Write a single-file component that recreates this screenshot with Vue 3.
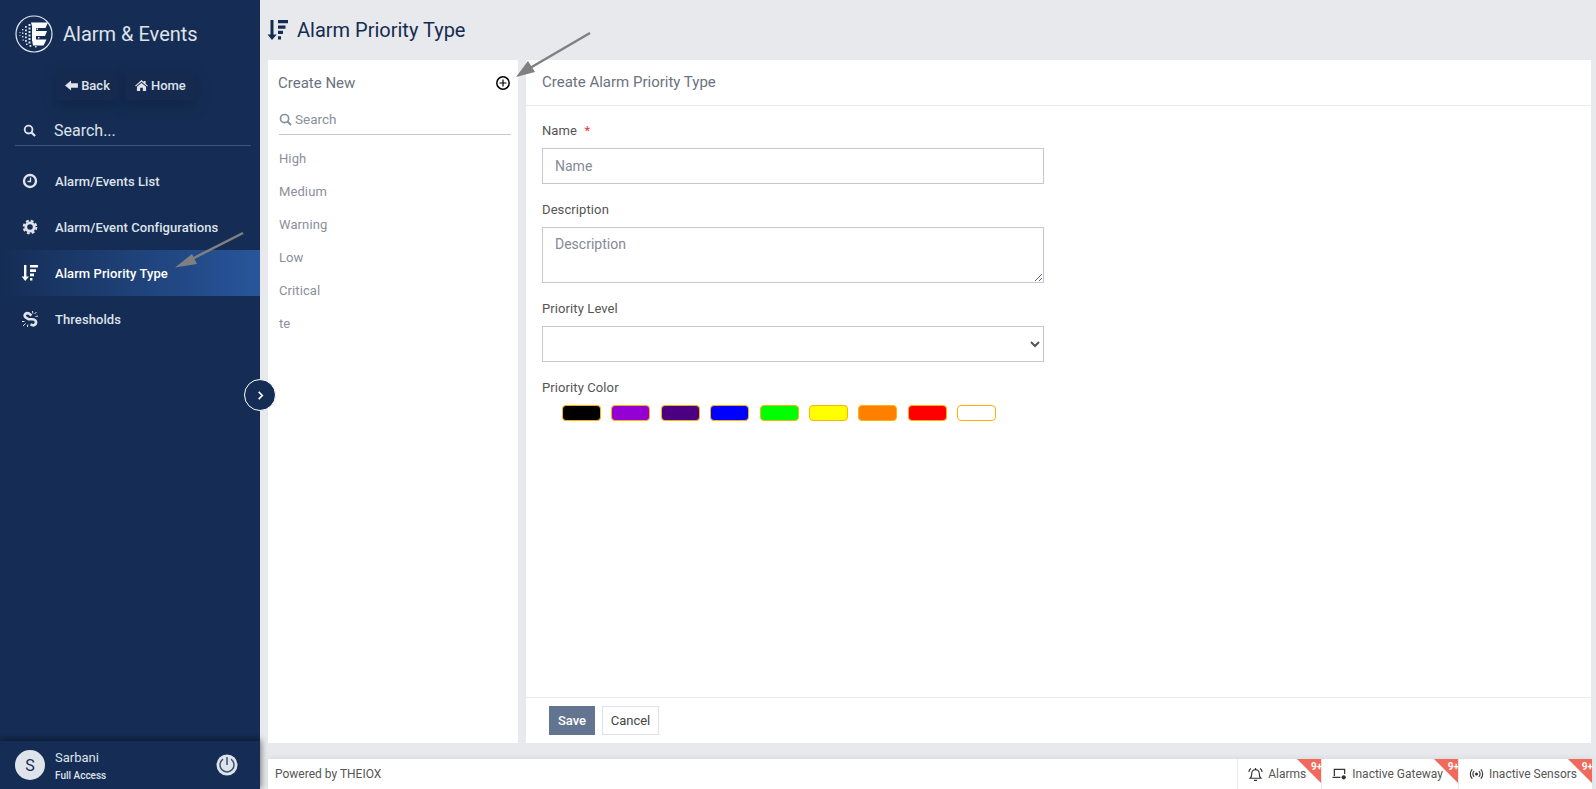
<template>
  <div class="app">
    <aside class="sidebar">
      <div class="brand">
        <svg class="logo" viewBox="0 0 38 38">
          <circle cx="19" cy="19" r="18" fill="none" stroke="#e3e6ec" stroke-width="1.200" />
          <path d="M16 7.500H33L30.500 13H17.500zM18 16H32L30 21H19zM17 24.500H31.500L28.500 30.500H18z" fill="#fff" />
          <path d="M17 12h4v14h-4z" fill="#fff" />
          <rect v-for="d in logoDots" :key="d[0] + '-' + d[1]" :x="d[0]" :y="d[1]" :width="d[2]" :height="d[2]" fill="#dfe3ea" />
        </svg>
        <span class="brand-name">Alarm &amp; Events</span>
      </div>
      <div class="nav-btns">
        <button class="nav-btn">
          <svg viewBox="0 0 14 12" width="13" height="11"><path d="M0 6l6.500-5.500V3.500H14v5H6.500v3z" fill="currentColor" /></svg>
          Back
        </button>
        <button class="nav-btn">
          <svg viewBox="0 0 14 12" width="13" height="11"><path d="M7 0l2.500 2.200V1h2v3L14 6.200l-.8.9L7 1.800.8 7.100 0 6.200zM2 7.400L7 3.200l5 4.200V12H8.500V8.500h-3V12H2z" fill="currentColor" /></svg>
          Home
        </button>
      </div>
      <div class="side-search">
        <svg viewBox="0 0 14 14" width="13" height="13"><circle cx="6" cy="6" r="4.200" fill="none" stroke="currentColor" stroke-width="2" /><path d="M9 9l4 4" stroke="currentColor" stroke-width="2.400" /></svg>
        <span>Search...</span>
      </div>
      <nav class="menu">
        <a v-for="item in menu" :key="item.label" class="menu-item" :class="{ active: item.active }">
          <svg v-if="item.icon === 'clock'" class="menu-icon" viewBox="0 0 16 16"><circle cx="8" cy="8" r="6" fill="none" stroke="currentColor" stroke-width="2.400" /><path d="M8.500 4.500V8.500H5.500" fill="none" stroke="currentColor" stroke-width="1.300" /></svg>
          <svg v-else-if="item.icon === 'cog'" class="menu-icon" viewBox="0 0 16 16"><circle cx="8" cy="8" r="4.200" fill="none" stroke="currentColor" stroke-width="2.800" /><circle cx="8" cy="8" r="6.300" fill="none" stroke="currentColor" stroke-width="2" stroke-dasharray="2.900 2.050" /></svg>
          <svg v-else-if="item.icon === 'sort'" class="menu-icon" viewBox="0 0 16 16"><path d="M2 0h2.400v11.500H7L3.200 16-.4 11.500H2zM8 0h8v2.600H8zM8 4.300h6v2.600H8zM8 8.600h4v2.600H8zM8 12.900h2.400v2.600H8z" fill="currentColor" /></svg>
          <svg v-else class="menu-icon" viewBox="0 0 16 16"><path d="M9.500 4.500L7 2.500Q5 1.500 3.200 3 2 4.500 3.500 6.300L6.500 8.300H10Q13 8.300 14 10.500 14.500 13.500 11.500 14.500L8.500 13.500" fill="none" stroke="currentColor" stroke-width="2.600" /><path d="M10.500 0l.3 2.500M14.500 1L12.500 3M16 5l-2.500.5M0 10.500h2.500M1 15l2.500-2.500M5.500 16l.3-2.500" stroke="currentColor" stroke-width="1" /></svg>
          <span>{{ item.label }}</span>
        </a>
      </nav>
      <button class="collapse">
        <svg viewBox="0 0 10 10" width="9" height="9"><path d="M3 1l4 4-4 4" fill="none" stroke="#fff" stroke-width="1.800" /></svg>
      </button>
      <div class="user">
        <div class="avatar">S</div>
        <div class="user-text">
          <div class="user-name">Sarbani</div>
          <div class="user-role">Full Access</div>
        </div>
        <svg class="power" viewBox="0 0 22 22" width="22" height="22">
          <circle cx="11" cy="11" r="10.500" fill="#dfe3ea" />
          <path d="M7 5.200a7 7 0 1 0 8 0" fill="none" stroke="#3b5275" stroke-width="1.500" />
          <path d="M11 3v8" stroke="#3b5275" stroke-width="1.500" />
        </svg>
      </div>
    </aside>

    <main class="main">
      <header class="page-title">
        <svg viewBox="0 0 16 16" width="20" height="20"><path d="M2 0h2.400v11.500H7L3.200 16-.4 11.500H2zM8 0h8v2.600H8zM8 4.300h6v2.600H8zM8 8.600h4v2.600H8zM8 12.900h2.400v2.600H8z" fill="#152c52" /></svg>
        <h1>Alarm Priority Type</h1>
      </header>

      <section class="content">
        <div class="list-panel">
          <div class="list-head">
            <span>Create New</span>
            <svg viewBox="0 0 14 14" width="14" height="14"><circle cx="7" cy="7" r="6.200" fill="none" stroke="#000" stroke-width="1.500" /><path d="M3.500 7h7M7 3.500v7" stroke="#000" stroke-width="1.200" /></svg>
          </div>
          <div class="list-search">
            <svg viewBox="0 0 14 14" width="13" height="13"><circle cx="6" cy="6" r="4.400" fill="none" stroke="currentColor" stroke-width="1.800" /><path d="M9 9l4 4" stroke="currentColor" stroke-width="2.200" /></svg>
            <span>Search</span>
          </div>
          <ul class="list">
            <li v-for="p in priorities" :key="p">{{ p }}</li>
          </ul>
        </div>

        <div class="form-panel">
          <div class="form-head">Create Alarm Priority Type</div>
          <form class="form-body" @submit.prevent>
            <label class="label">Name <em>*</em></label>
            <input class="field" placeholder="Name" />
            <label class="label">Description</label>
            <textarea class="field area" placeholder="Description"></textarea>
            <label class="label">Priority Level</label>
            <select class="field pick"><option></option></select>
            <label class="label">Priority Color</label>
            <div class="swatches">
              <span v-for="c in colors" :key="c" class="swatch" :style="{ backgroundColor: c }"></span>
            </div>
          </form>
          <div class="form-foot">
            <button class="btn save">Save</button>
            <button class="btn cancel">Cancel</button>
          </div>
        </div>
      </section>

      <footer class="footer">
        <span class="powered">Powered by THEIOX</span>
        <div v-for="t in tabs" :key="t.label" class="tab">
          <svg v-if="t.icon === 'bell'" viewBox="0 0 14 14" width="15" height="15"><path d="M7 2.500a3.500 3.500 0 0 1 3.500 3.500c0 3 1 4 1.500 4.500H2C2.500 10 3.500 9 3.500 6A3.500 3.500 0 0 1 7 2.500zM5.500 12.500h3M.8 4.500Q1 2.500 2.800 1.500M13.200 4.500Q13 2.500 11.200 1.500M7 1v1.500" fill="none" stroke="#333" stroke-width="1.100" /></svg>
          <svg v-else-if="t.icon === 'gateway'" viewBox="0 0 16 14" width="15" height="14"><path d="M2.500 9V2h11v5M0.500 10.500h8.500" fill="none" stroke="#333" stroke-width="1.300" /><circle cx="12.500" cy="10.500" r="2.300" fill="#333" /></svg>
          <svg v-else viewBox="0 0 16 14" width="15" height="14"><circle cx="8" cy="7" r="1.600" fill="#333" /><path d="M5.500 4a4 4 0 0 0 0 6M10.500 4a4 4 0 0 1 0 6M3.500 2a7 7 0 0 0 0 10M12.500 2a7 7 0 0 1 0 10" fill="none" stroke="#333" stroke-width="1.200" /></svg>
          <span>{{ t.label }}</span>
          <i class="corner"></i>
          <b class="count">9+</b>
        </div>
      </footer>
    </main>

    <!-- annotation arrows drawn over the screenshot -->
    <svg class="arrows" width="1596" height="789">
      <path d="M243 233L190 260" stroke="#808080" stroke-width="2.500" />
      <path d="M175 267.500L192 254 197 264z" fill="#808080" />
      <path d="M590 33L530 68" stroke="#808080" stroke-width="2.500" />
      <path d="M516 77L528 61 535 72z" fill="#808080" />
    </svg>
  </div>
</template>

<script setup>
const menu = [
  { label: 'Alarm/Events List', icon: 'clock' },
  { label: 'Alarm/Event Configurations', icon: 'cog' },
  { label: 'Alarm Priority Type', icon: 'sort', active: true },
  { label: 'Thresholds', icon: 'link' }
]

const priorities = ['High', 'Medium', 'Warning', 'Low', 'Critical', 'te']

const colors = ['#000000', '#9400d3', '#4b0082', '#0000ff', '#00ff00', '#ffff00', '#ff7f00', '#ff0000', '#ffffff']

const tabs = [
  { label: 'Alarms', icon: 'bell' },
  { label: 'Inactive Gateway', icon: 'gateway' },
  { label: 'Inactive Sensors', icon: 'sensor' }
]

// x, y, size of the little squares breaking off the logo's E
const logoDots = [
  [13.500, 9, 2], [13.500, 12.500, 2], [13.500, 16, 2], [13.500, 19.500, 2], [13.500, 23, 2], [13.500, 26.500, 2], [14.500, 30, 1.800],
  [10, 11, 1.800], [10, 14.500, 1.800], [10, 18, 1.800], [10, 21.500, 1.800], [10, 25, 1.800], [11, 28.500, 1.500],
  [7, 14, 1.400], [7, 17.500, 1.400], [7, 21, 1.400], [7.500, 24.500, 1.200],
  [4.500, 17, 1], [4.500, 20, 1], [21.500, 13.500, 1.500], [23, 22, 1.500], [20, 31, 1.500]
]
</script>

<style>
html, body {
  margin: 0;
  overflow: hidden;
}
</style>

<style scoped>
.app {
  position: relative;
  display: flex;
  width: 1596px;
  height: 789px;
  background: #e8e9ed;
  font-family: Roboto, "Liberation Sans", sans-serif;
  overflow: hidden;
}

.sidebar {
  position: relative;
  display: flex;
  flex-direction: column;
  flex: none;
  width: 260px;
  background: #152d54;
  color: #dfe3ea;
}

.brand {
  display: flex;
  align-items: center;
  gap: 10px;
  padding: 15px 15px 0;
  height: 38px;
}

.logo {
  width: 38px;
  height: 38px;
  flex: none;
}

.brand-name {
  font-size: 20px;
}

.nav-btns {
  display: flex;
  justify-content: center;
  gap: 7px;
  margin-top: 17px;
  padding-right: 9px;
}

.nav-btn {
  display: flex;
  align-items: center;
  gap: 3px;
  height: 30px;
  padding: 0 9px;
  border: 0;
  border-radius: 3px;
  background: #152a4e;
  box-shadow: 0 6px 14px rgba(10, 25, 50, 0.35);
  color: #dfe3ea;
  font: 500 13px Roboto, sans-serif;
}

.side-search {
  display: flex;
  align-items: center;
  gap: 18px;
  height: 28px;
  margin: 15px 9px 0 15px;
  padding: 1px 0 1px 8px;
  border-bottom: 1px solid #3d5578;
  font-size: 16px;
}

.menu {
  margin-top: 12px;
}

.menu-item {
  display: flex;
  align-items: center;
  gap: 17px;
  height: 46px;
  padding-left: 22px;
  font-size: 13px;
  font-weight: 500;
  letter-spacing: 0.08px;
}

.menu-item.active {
  background: linear-gradient(90deg, #152d54, #28559b);
  color: #fff;
}

.menu-icon {
  width: 16px;
  height: 16px;
  flex: none;
  overflow: visible;
}

.collapse {
  position: absolute;
  top: 379px;
  left: 244px;
  display: flex;
  align-items: center;
  justify-content: center;
  width: 32px;
  height: 32px;
  padding: 0;
  border: 1px solid #fff;
  border-radius: 50%;
  background: #152d54;
}

.user {
  display: flex;
  align-items: center;
  margin-top: auto;
  height: 48px;
  padding: 0 22px 0 15px;
  box-shadow: 0 -2px 6px rgba(0, 0, 0, 0.3), 2px 0 6px rgba(0, 0, 0, 0.25);
}

.avatar {
  display: flex;
  align-items: center;
  justify-content: center;
  width: 30px;
  height: 30px;
  border-radius: 50%;
  background: #dfe3ea;
  color: #152d54;
  font-size: 16px;
}

.user-text {
  flex: 1;
  margin-left: 10px;
  padding-top: 2px;
}

.user-name {
  font-size: 13px;
  line-height: 18px;
}

.user-role {
  font-size: 10px;
  font-weight: 500;
  line-height: 16px;
  margin-top: 1px;
}

.main {
  display: flex;
  flex-direction: column;
  flex: 1;
  min-width: 0;
}

.page-title {
  display: flex;
  align-items: center;
  gap: 9px;
  height: 60px;
  padding-left: 8px;
  flex: none;
}

.page-title svg {
  overflow: visible;
}

.page-title h1 {
  margin: 0;
  color: #152c52;
  font-size: 20px;
  font-weight: 400;
}

.content {
  display: flex;
  gap: 8px;
  height: 683px;
  padding: 0 5px 0 8px;
  flex: none;
}

.list-panel {
  width: 250px;
  flex: none;
  background: #fff;
}

.list-head {
  display: flex;
  align-items: center;
  justify-content: space-between;
  height: 45px;
  padding: 0 8px 0 10px;
  color: #6b7280;
  font-size: 15px;
}

.list-search {
  display: flex;
  align-items: center;
  gap: 3px;
  height: 30px;
  margin: -1px 7px 0 11px;
  border-bottom: 1px solid #c5c7d6;
  color: #8a8f9c;
  font-size: 13.500px;
}

.list {
  margin: 7px 0 0;
  padding: 0;
  list-style: none;
}

.list li {
  height: 33px;
  padding-left: 11px;
  color: #8a8f9c;
  font-size: 13px;
  letter-spacing: 0.1px;
  line-height: 33px;
}

.form-panel {
  display: flex;
  flex-direction: column;
  flex: 1;
  background: #fff;
}

.form-head {
  height: 45px;
  padding-left: 16px;
  border-bottom: 1px solid #e8e9ed;
  color: #6b7280;
  font-size: 15px;
  line-height: 44px;
}

.form-body {
  display: flex;
  flex-direction: column;
  flex: 1;
  padding: 0 16px;
}

.label {
  height: 18px;
  margin: 17px 0 8px;
  color: #555;
  font-size: 13px;
  letter-spacing: 0.1px;
  line-height: 18px;
}

.label:first-child {
  margin-top: 16px;
}

.label em {
  margin-left: 4px;
  color: #e53935;
  font-style: normal;
}

.field {
  box-sizing: border-box;
  width: 502px;
  height: 36px;
  padding: 0 12px;
  border: 1px solid #c5c7d6;
  background: #fff;
  color: #555;
  font: 14px Roboto, sans-serif;
  outline: none;
}

.field::placeholder {
  color: #858a97;
}

.area {
  height: 56px;
  padding-top: 8px;
}

.pick {
  padding: 0 4px;
}

.swatches {
  display: flex;
  gap: 10.400px;
  padding-left: 20px;
}

.swatch {
  box-sizing: border-box;
  width: 39px;
  height: 16px;
  border: 1px solid #ffb300;
  border-radius: 4px;
}

.form-foot {
  box-sizing: border-box;
  display: flex;
  align-items: flex-start;
  gap: 7px;
  height: 46px;
  padding: 8px 0 0 23px;
  border-top: 1px solid #e8e9ed;
}

.btn {
  box-sizing: border-box;
  height: 29px;
  padding: 0;
  font: 13px Roboto, sans-serif;
}

.save {
  width: 46px;
  border: 0;
  background: #627490;
  color: #fff;
  font-weight: 500;
}

.cancel {
  width: 57px;
  border: 1px solid #dfe1ea;
  background: #fff;
  color: #444;
}

.footer {
  display: flex;
  align-items: center;
  height: 30px;
  margin: 16px 4px 0 8px;
  background: #fff;
  box-shadow: 0 -2px 4px rgba(0, 0, 0, 0.05);
  color: #555;
  font-size: 12px;
}

.powered {
  flex: 1;
  padding-left: 7px;
}

.tab {
  position: relative;
  display: flex;
  align-items: center;
  gap: 5px;
  height: 100%;
  padding: 0 15px 0 10px;
  border-left: 1px solid #e8e9ed;
}

.corner {
  position: absolute;
  top: 0;
  right: 0;
  border-style: solid;
  border-width: 12.500px;
  border-color: #f0695a #f0695a transparent transparent;
}

.count {
  position: absolute;
  top: 2px;
  right: -1px;
  color: #fff;
  font-size: 10px;
  font-weight: 700;
}

.arrows {
  position: absolute;
  top: 0;
  left: 0;
  pointer-events: none;
}
</style>
